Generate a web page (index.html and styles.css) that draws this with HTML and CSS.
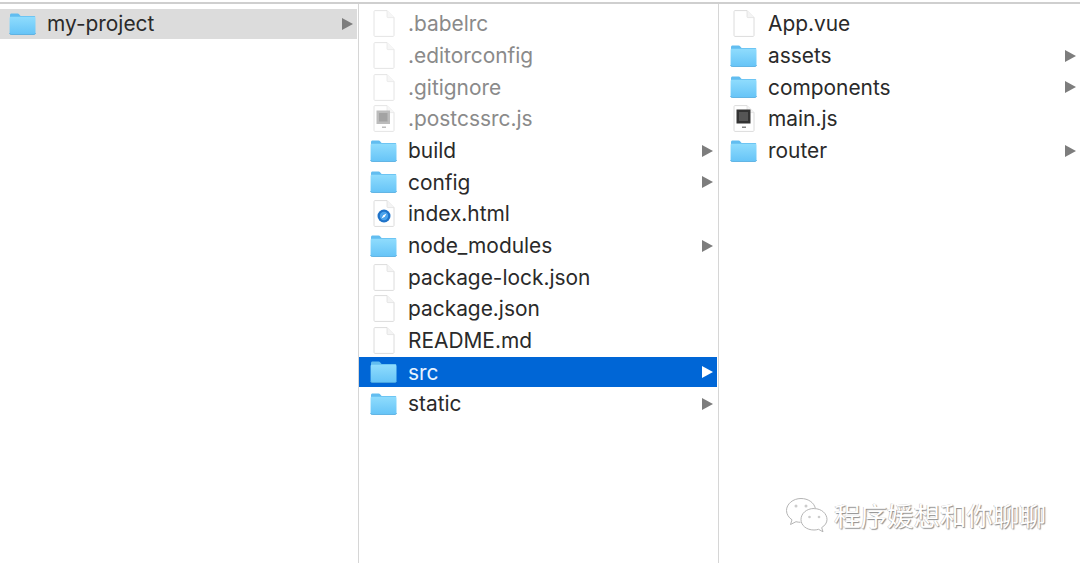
FILE: index.html
```html
<!DOCTYPE html>
<html lang="en">
<head>
<meta charset="utf-8">
<title>my-project</title>
<link rel="stylesheet" href="styles.css">
</head>
<body>
<svg class="defs" width="0" height="0" aria-hidden="true">
  <defs>
    <linearGradient id="fg" x1="0" y1="0" x2="0" y2="1">
      <stop offset="0" stop-color="#8fdcfd"/>
      <stop offset="1" stop-color="#66c4f7"/>
    </linearGradient>
    <symbol id="folder" viewBox="0 0 27 22">
      <path d="M1 4V2.2C1 1.2 1.6.6 2.6.6h6c.8 0 1.2.3 1.7.9L11.6 3H25c.9 0 1.5.6 1.5 1.5V4z" fill="#62bdf0"/>
      <path d="M.6 5.2C.6 4.3 1.2 3.8 2 3.8h23c.9 0 1.5.5 1.5 1.4v14.6c0 1-.6 1.6-1.5 1.6H2.100c-.9 0-1.500-.6-1.500-1.600z" fill="url(#fg)"/>
      <path d="M.6 20c0 1 .6 1.500 1.500 1.500H25c.9 0 1.500-.5 1.500-1.500" fill="none" stroke="#4fa9de" stroke-width=".8"/>
    </symbol>
    <symbol id="file" viewBox="0 0 22 27">
      <path d="M1 1.500C1 1 1.400.6 1.900.6H14l7 7v17.900c0 .5-.4.9-.9.9H1.900c-.5 0-.9-.4-.9-.9z" fill="#fff" stroke="#dcdcdc"/>
      <path d="M14 .6v6.200c0 .5.300.8.800.8H21" fill="#f4f4f4" stroke="#e0e0e0" stroke-width=".8"/>
    </symbol>
    <symbol id="arrow" viewBox="0 0 11 12">
      <path d="M0 0 11 6 0 12z" fill="currentColor"/>
    </symbol>
  </defs>
</svg>

<div class="topline"></div>
<main class="browser">
  <section class="column col-first">
    <div class="row row-parent">
      <svg class="ico-folder"><use href="#folder"/></svg>
      <span class="name">my-project</span>
      <svg class="arrow"><use href="#arrow"/></svg>
    </div>
  </section>

  <section class="column">
    <div class="row hidden-file">
      <svg class="ico-file"><use href="#file"/></svg>
      <span class="name">.babelrc</span>
    </div>
    <div class="row hidden-file">
      <svg class="ico-file"><use href="#file"/></svg>
      <span class="name">.editorconfig</span>
    </div>
    <div class="row hidden-file">
      <svg class="ico-file"><use href="#file"/></svg>
      <span class="name">.gitignore</span>
    </div>
    <div class="row hidden-file">
      <svg class="ico-file" viewBox="0 0 22 27">
        <use href="#file"/>
        <rect x="3.500" y="5.500" width="13.500" height="13.500" fill="#a6a6a6"/>
        <rect x="6" y="8" width="8.500" height="8.500" fill="#858585"/>
        <rect x="9" y="21.500" width="4" height="1.500" fill="#aaa"/>
      </svg>
      <span class="name">.postcssrc.js</span>
    </div>
    <div class="row">
      <svg class="ico-folder"><use href="#folder"/></svg>
      <span class="name">build</span>
      <svg class="arrow"><use href="#arrow"/></svg>
    </div>
    <div class="row">
      <svg class="ico-folder"><use href="#folder"/></svg>
      <span class="name">config</span>
      <svg class="arrow"><use href="#arrow"/></svg>
    </div>
    <div class="row">
      <svg class="ico-file" viewBox="0 0 22 27">
        <use href="#file"/>
        <circle cx="11" cy="16" r="6.500" fill="#1f73c9"/>
        <circle cx="11" cy="16" r="4.200" fill="#4aa3ec"/>
        <path d="M13.500 13.500 11.800 16.800 8.500 18.500 10.200 15.200z" fill="#fff"/>
      </svg>
      <span class="name">index.html</span>
    </div>
    <div class="row">
      <svg class="ico-folder"><use href="#folder"/></svg>
      <span class="name">node_modules</span>
      <svg class="arrow"><use href="#arrow"/></svg>
    </div>
    <div class="row">
      <svg class="ico-file"><use href="#file"/></svg>
      <span class="name">package-lock.json</span>
    </div>
    <div class="row">
      <svg class="ico-file"><use href="#file"/></svg>
      <span class="name">package.json</span>
    </div>
    <div class="row">
      <svg class="ico-file"><use href="#file"/></svg>
      <span class="name">README.md</span>
    </div>
    <div class="row row-selected">
      <svg class="ico-folder"><use href="#folder"/></svg>
      <span class="name">src</span>
      <svg class="arrow"><use href="#arrow"/></svg>
    </div>
    <div class="row">
      <svg class="ico-folder"><use href="#folder"/></svg>
      <span class="name">static</span>
      <svg class="arrow"><use href="#arrow"/></svg>
    </div>
  </section>

  <section class="column col-last">
    <div class="row">
      <svg class="ico-file"><use href="#file"/></svg>
      <span class="name">App.vue</span>
    </div>
    <div class="row">
      <svg class="ico-folder"><use href="#folder"/></svg>
      <span class="name">assets</span>
      <svg class="arrow"><use href="#arrow"/></svg>
    </div>
    <div class="row">
      <svg class="ico-folder"><use href="#folder"/></svg>
      <span class="name">components</span>
      <svg class="arrow"><use href="#arrow"/></svg>
    </div>
    <div class="row">
      <svg class="ico-file" viewBox="0 0 22 27">
        <use href="#file"/>
        <rect x="3.500" y="4.500" width="14" height="14" fill="#333"/>
        <rect x="6" y="7" width="9" height="9" fill="#555"/>
        <rect x="9" y="21.500" width="4" height="1.500" fill="#888"/>
      </svg>
      <span class="name">main.js</span>
    </div>
    <div class="row">
      <svg class="ico-folder"><use href="#folder"/></svg>
      <span class="name">router</span>
      <svg class="arrow"><use href="#arrow"/></svg>
    </div>
  </section>
</main>

<div class="watermark">
  <svg class="wechat" viewBox="0 0 44 36" fill="#fff" stroke="#b5b5b5" stroke-width="1">
    <path d="M16 1.500C8 1.500 1.500 7 1.500 13.500c0 3.800 2.200 7 5.500 9.300L5.500 27.500l5.500-2.800c1.500.4 3 .6 4.500.6"/>
    <path d="M16 1.500c7 0 13 4 14.300 9.700"/>
    <path d="M29 11.500c-7.500 0-13 5-13 11s5.500 10.500 13 10.500c1.500 0 3-.2 4.500-.7l4.500 2.500-1.300-4.200c3.200-2 5.300-4.800 5.300-8 0-6-5.500-11-12.800-11z"/>
    <circle cx="11" cy="9" r="1.500" fill="#ccc" stroke="none"/>
    <circle cx="21" cy="9" r="1.500" fill="#ccc" stroke="none"/>
    <circle cx="24.500" cy="20" r="1.300" fill="#ccc" stroke="none"/>
    <circle cx="34" cy="20" r="1.300" fill="#ccc" stroke="none"/>
  </svg>
  <span class="wm-text">程序媛想和你聊聊</span>
</div>
</body>
</html>
```
FILE: styles.css
```css
* {
  box-sizing: border-box;
}

html,
body {
  margin: 0;
  height: 100%;
  overflow: hidden;
  background: #fff;
}

body {
  position: relative;
  font-family: Inter, "Liberation Sans", Arial, sans-serif;
  display: flex;
  flex-direction: column;
}

.defs {
  position: absolute;
}

.topline {
  flex: none;
  height: 4px;
  border-top: 2px solid #fff;
  border-bottom: 2px solid #cfcfcf;
}

.browser {
  flex: 1;
  display: flex;
  min-height: 0;
}

.column {
  flex: none;
  width: 360px;
  padding-top: 5px;
  padding-right: 1px;
  border-right: 1px solid #d6d6d6;
  display: flex;
  flex-direction: column;
  gap: 2px;
}

.col-first {
  width: 359px;
  padding-right: 1px;
}

.col-last {
  flex: 1;
  border-right: none;
  padding-right: 0;
}

.row {
  flex: none;
  height: 29.68px;
  display: flex;
  align-items: center;
  padding-left: 11px;
  padding-right: 4px;
  color: #2a2a2a;
  font-size: 20.900px;
}

.col-first .row {
  padding-left: 9px;
}

.name {
  flex: 1;
  min-width: 0;
  white-space: nowrap;
  margin-left: 11px;
}

.ico-folder {
  flex: none;
  width: 27px;
  height: 22px;
}

.ico-file {
  flex: none;
  width: 22px;
  height: 27px;
  margin-left: 3px;
  margin-right: 2px;
}

.arrow {
  flex: none;
  width: 11px;
  height: 12px;
  color: #7d7d7d;
}

.row-parent {
  background: #dcdcdc;
}

.row-selected {
  background: #0066d6;
  color: #fff;
}

.row-selected .name {
  color: #e8f3ff;
}

.row-selected .arrow {
  color: #fff;
}

.hidden-file {
  color: #8a8a8a;
}

.hidden-file .ico-file {
  opacity: 0.75;
}

.watermark {
  position: absolute;
  left: 785px;
  top: 497px;
  display: flex;
  align-items: center;
  gap: 5px;
}

.wechat {
  width: 44px;
  height: 36px;
}

.wm-text {
  font-family: "Noto Sans CJK SC", sans-serif;
  font-size: 26.500px;
  line-height: 36px;
  white-space: nowrap;
  color: #fff;
  text-shadow: 1px 1px 1px #8c8c8c, -0.5px -0.5px 0.5px #bbb;
}
```
